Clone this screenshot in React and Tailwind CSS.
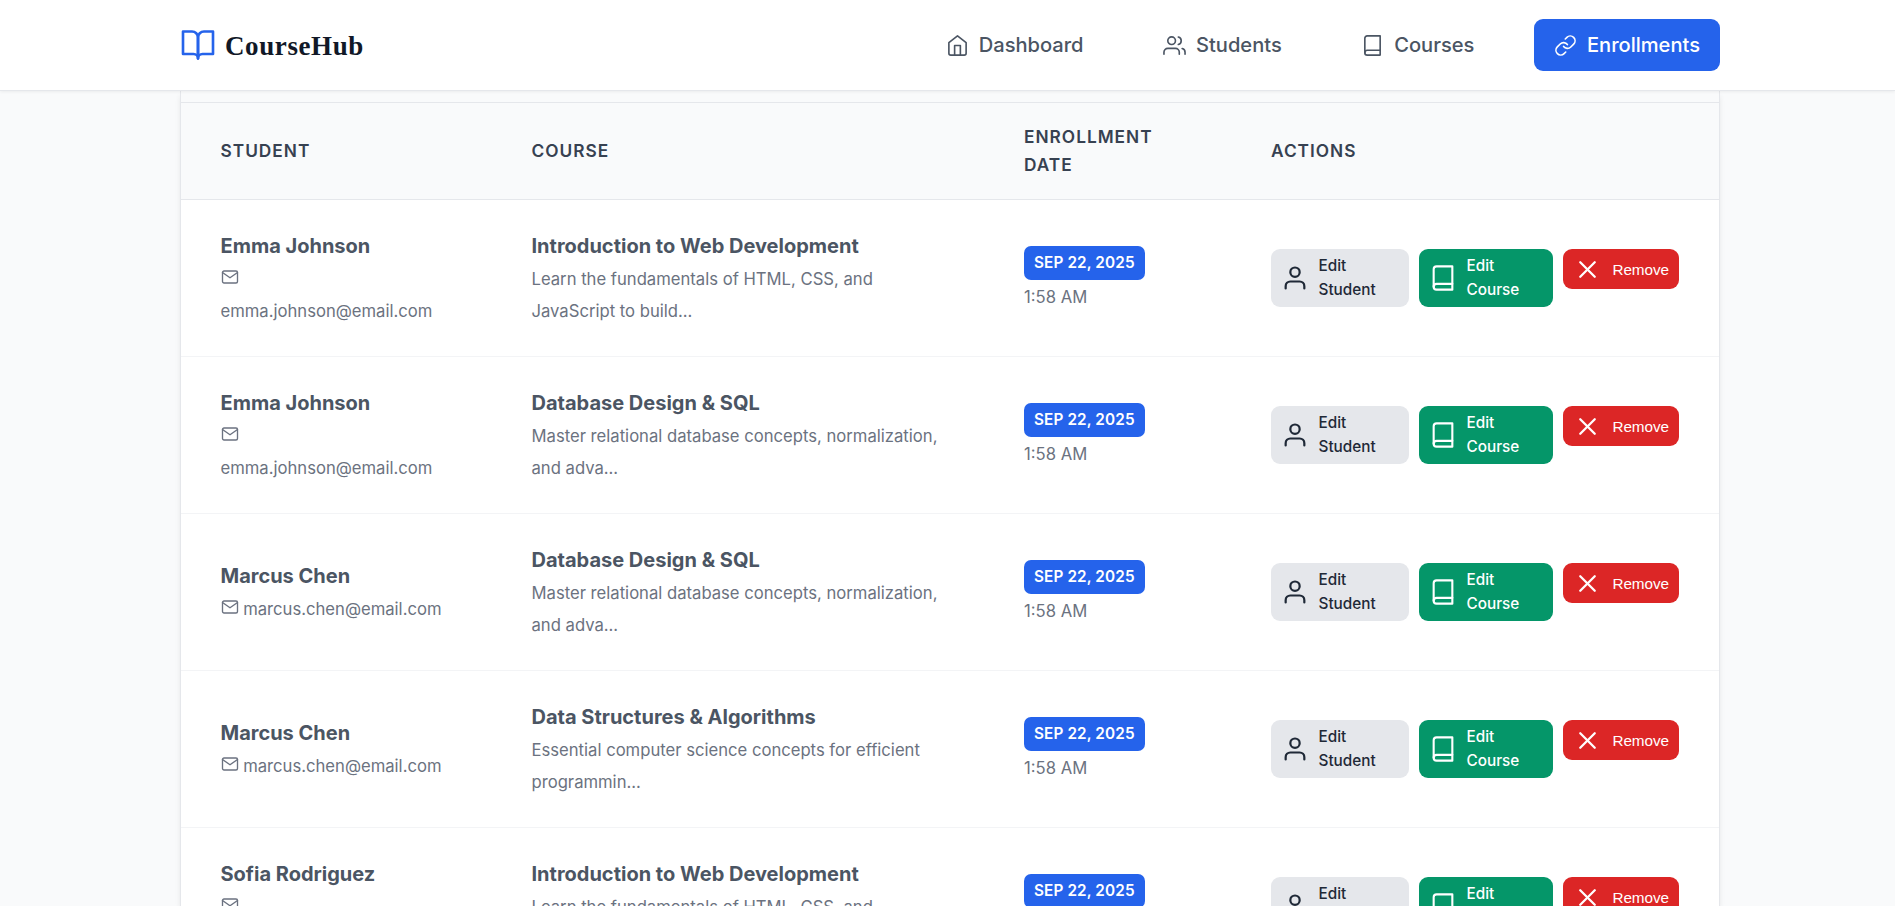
import React from "react";
import { FiBook, FiBookOpen, FiHome, FiLink, FiMail, FiUser, FiUsers, FiX } from "react-icons/fi";

const WEB = ["Introduction to Web Development", "Learn the fundamentals of HTML, CSS, and JavaScript to build..."];
const SQL = ["Database Design & SQL", "Master relational database concepts, normalization, and adva..."];
const DSA = ["Data Structures & Algorithms", "Essential computer science concepts for efficient programmin..."];

const rows = [
  { name: "Emma Johnson", email: "emma.johnson@email.com", course: WEB },
  { name: "Emma Johnson", email: "emma.johnson@email.com", course: SQL },
  { name: "Marcus Chen", email: "marcus.chen@email.com", course: SQL },
  { name: "Marcus Chen", email: "marcus.chen@email.com", course: DSA },
  { name: "Sofia Rodriguez", email: "sofia.rodriguez@email.com", course: WEB },
];

const COLS = "grid grid-cols-[311px_492.5px_247px_1fr] pl-[39.5px]";

function NavItem({ icon: Icon, label, active }) {
  return (
    <a
      className={
        "flex h-[52px] items-center gap-[10px] rounded-[9px] px-5 text-[20.1px] " +
        (active ? "bg-[#2563eb] font-medium text-white" : "font-medium text-[#4b5563]")
      }
    >
      <Icon className="size-[23px]" strokeWidth={1.7} />
      <span className="pt-px">{label}</span>
    </a>
  );
}

function Row({ name, email, course }) {
  return (
    <div className={COLS + " h-[157px] shrink-0 items-center border-b border-[#f3f4f6]"}>
      <div className="w-[224px]">
        <div className="text-[20px] leading-[34px] font-bold text-[#4b5563]">{name}</div>
        <div className="pb-px text-[16.65px] leading-8 text-[#6b7280]">
          <FiMail className="inline size-[18px] align-[-1px]" strokeWidth={1.8} /> {email}
        </div>
      </div>
      <div className="w-[412px]">
        <div className="text-[20px] leading-[34px] font-bold text-[#4b5563]">{course[0]}</div>
        <div className="pb-px text-[16.65px] leading-8 text-[#6b7280]">{course[1]}</div>
      </div>
      <div className="flex flex-col items-start pt-[2px]">
        <span className="flex h-[34px] items-center rounded-[7px] bg-[#2563eb] px-2.5 pt-px text-[15.3px] font-semibold tracking-[0.12px] text-white">
          SEP 22, 2025
        </span>
        <span className="pt-px text-[16.65px] leading-8 text-[#6b7280]">1:58 AM</span>
      </div>
      <div className="flex items-start gap-2.5">
        <button className="flex h-[58px] w-[138px] items-center gap-[9.5px] rounded-[9px] bg-[#e5e7eb] pl-2.5 text-left text-[15.3px] leading-6 font-medium text-[#1f2937]">
          <FiUser className="size-7 shrink-0" strokeWidth={1.9} />
          <span className="w-16">Edit Student</span>
        </button>
        <button className="flex h-[58px] w-[134px] items-center gap-[9.5px] rounded-[9px] bg-[#059669] pl-2.5 text-left text-[15.3px] leading-6 font-medium text-white">
          <FiBook className="size-7 shrink-0" strokeWidth={1.8} />
          <span className="w-16">Edit Course</span>
        </button>
        <button className="flex h-10 w-[116px] items-center gap-[10.5px] rounded-[9px] bg-[#dc2626] pl-[10px] font-['Liberation_Sans',sans-serif] text-[15.3px] tracking-[-0.1px] text-white">
          <FiX className="size-[29px]" strokeWidth={1.9} />
          <span className="pt-[2px]">Remove</span>
        </button>
      </div>
    </div>
  );
}

export default function App() {
  return (
    <div className="flex h-[906px] flex-col overflow-hidden bg-[#f9fafb] font-['Inter',sans-serif] [font-optical-sizing:none]">
      <header className="z-10 h-[91px] shrink-0 border-b border-[#e5e7eb] bg-white shadow-[0_1px_3px_rgba(0,0,0,0.06)]">
        <div className="ml-[180px] flex h-[90px] w-[1540px] items-center justify-between">
          <div className="flex items-center gap-[9px]">
            <FiBookOpen className="size-9 text-[#2563eb]" strokeWidth={1.75} />
            <span className="pt-[2px] font-['Liberation_Serif',serif] text-[27px] font-bold tracking-[0.6px] text-[#111827]">CourseHub</span>
          </div>
          <nav className="flex gap-[39.5px]">
            <NavItem icon={FiHome} label="Dashboard" />
            <NavItem icon={FiUsers} label="Students" />
            <NavItem icon={FiBook} label="Courses" />
            <NavItem icon={FiLink} label="Enrollments" active />
          </nav>
        </div>
      </header>
      <main className="ml-[180px] flex min-h-0 w-[1540px] flex-1 flex-col border-x border-[#e5e7eb] bg-white shadow-[0_4px_6px_-1px_rgba(0,0,0,0.1)]">
        <div className="h-3 shrink-0 border-b border-[#e5e7eb] bg-[#f9fafb]" />
        <div className={COLS + " h-[97px] shrink-0 items-center border-b border-[#e5e7eb] bg-[#f9fafb] text-[17.3px] leading-7 font-semibold tracking-[1px] text-[#374151]"}>
          <span>STUDENT</span>
          <span>COURSE</span>
          <span className="w-40">ENROLLMENT DATE</span>
          <span>ACTIONS</span>
        </div>
        <div className="flex min-h-0 flex-1 flex-col overflow-hidden">
          {rows.map((row, i) => (
            <Row key={i} {...row} />
          ))}
        </div>
      </main>
    </div>
  );
}
